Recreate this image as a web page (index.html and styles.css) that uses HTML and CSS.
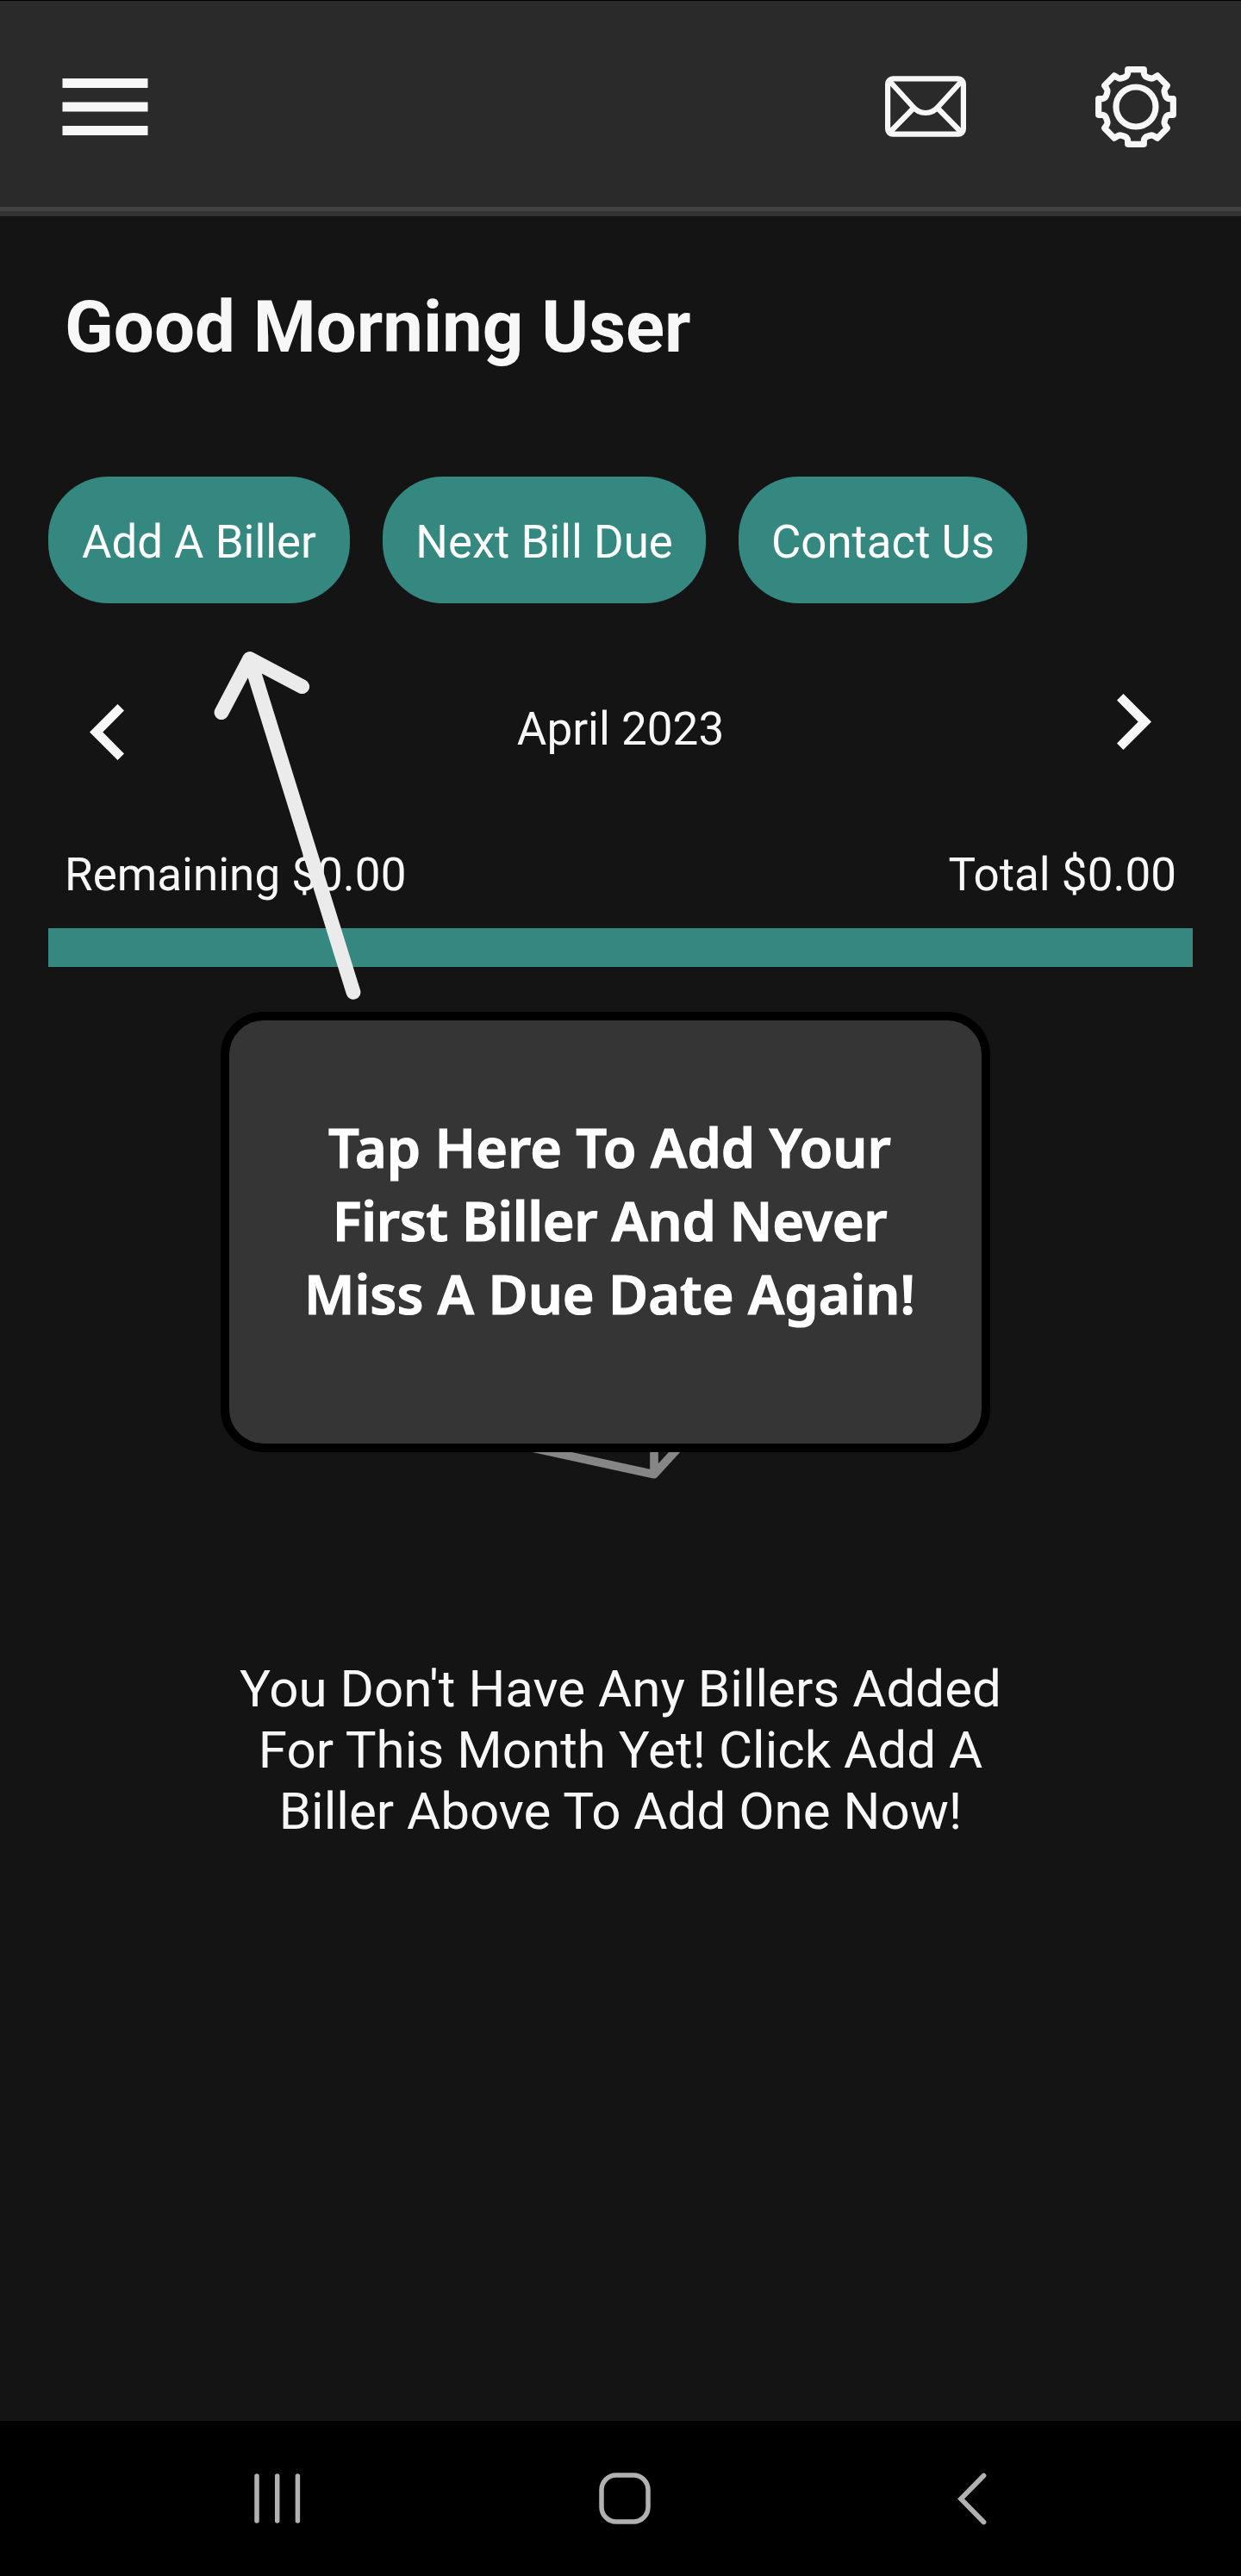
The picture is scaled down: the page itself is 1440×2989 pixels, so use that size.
FILE: index.html
```
<!DOCTYPE html>
<html lang="en">
<head>
<meta charset="utf-8">
<title>Bills</title>
<link rel="stylesheet" href="styles.css">
</head>
<body>
<div class="screen">
  <header class="topbar">
    <svg class="icon-menu" width="100" height="66" viewBox="0 0 100 66" fill="#f7f7f7">
      <rect x=".5" width="99" height="11"/><rect x=".5" y="27.5" width="99" height="11"/><rect x=".5" y="55" width="99" height="11"/>
    </svg>
    <div class="topbar-actions">
      <svg width="94" height="71" viewBox="0 0 94 71" fill="none" stroke="#f7f7f7" stroke-width="6.2">
        <rect x="3.1" y="3.4" width="87.8" height="64.3" rx="6"/>
        <path d="M6 7 32 35.500Q38 43 47 43Q56 43 62 35.500L88 7M6 65 33.500 37M88 65 60.500 37"/>
      </svg>
      <svg width="94" height="94" viewBox="-141 -141 282 282" fill="none" stroke="#f7f7f7" stroke-width="21.500" stroke-linejoin="round">
        <circle r="69"/>
        <path d="M-28-130H28V-117Q30-105 42-102L53-99Q58-98 64-102L75-109 109-74 102-64Q98-58 99-53L102-42Q105-30 117-28H130V28H117Q105 30 102 42L99 53Q98 58 102 64L109 74 75 109 64 102Q58 98 53 99L42 102Q30 105 28 117V130H-28V117Q-30 105-42 102L-53 99Q-58 98-64 102L-75 109-109 74-102 64Q-98 58-99 53L-102 42Q-105 30-117 28H-130V-28H-117Q-105-30-102-42L-99-53Q-98-58-102-64L-109-74-75-109-64-102Q-58-98-53-99L-42-102Q-30-105-28-117Z"/>
      </svg>
    </div>
  </header>

  <main class="content">
    <h1 class="greeting">Good Morning User</h1>
    <div class="actions">
      <button class="pill pill-add">Add A Biller</button>
      <button class="pill pill-next">Next Bill Due</button>
      <button class="pill pill-contact">Contact Us</button>
    </div>
    <div class="month">
      <svg class="prev" width="40" height="65" viewBox="0 0 40 65" fill="#f7f7f7"><path d="M0 32.500 32.500 0 40 7.500 15.300 32.500 40 57.500 32.500 65Z"/></svg>
      <span>April 2023</span>
      <svg class="next" width="40" height="65" viewBox="0 0 40 65" fill="#f7f7f7"><path d="M40 32.500 7.500 0 0 7.500 24.700 32.500 0 57.500 7.500 65Z"/></svg>
    </div>
    <div class="totals"><span>Remaining $0.00</span><span>Total $0.00</span></div>
    <div class="progress"></div>

    <section class="empty">
      <svg class="plane" width="320" height="320" viewBox="0 0 320 320" fill="none" stroke="#868686" stroke-width="9.700" stroke-linejoin="round"><path d="M6 153.700 199 195.700 314 70ZM199 195.700V110"/></svg>
      <p class="empty-text">You Don't Have Any Billers Added<br>For This Month Yet! Click Add A<br>Biller Above To Add One Now!</p>
    </section>
  </main>

  <nav class="navbar">
    <svg width="54" height="58" viewBox="0 0 54 58" stroke="#b1b1b1" stroke-width="5.500" stroke-linecap="round"><path d="M3 3V55M26.700 3V55M50.400 3V55"/></svg>
    <svg class="nav-home" width="60" height="60" viewBox="0 0 60 60" fill="none" stroke="#b1b1b1" stroke-width="5.500"><rect x="3" y="3" width="54" height="54" rx="17"/></svg>
    <svg width="34" height="61" viewBox="0 0 34 61" fill="none" stroke="#b1b1b1" stroke-width="5.800" stroke-linecap="round"><path d="M30.500 3.500 4 30.500 30.500 57.500"/></svg>
  </nav>

  <div class="coach">
    <p><span class="l1">Tap Here To Add Your</span><br><span class="l2">First Biller And Never</span><br><span class="l3">Miss A Due Date Again!</span></p>
  </div>
  <svg class="coach-arrow" width="180" height="420" viewBox="0 0 180 420" fill="none" stroke="#ebebeb" stroke-width="16.800" stroke-linecap="round" stroke-linejoin="round"><path d="M17 86.700 49.700 24.500 110.700 56.700M49.700 24.500 170 411.300"/></svg>
</div>
</body>
</html>
```
FILE: styles.css
```
* { box-sizing: border-box; }
body { margin: 0; background: #141414; }
svg { display: block; flex: none; }
.screen {
  position: relative;
  display: flex;
  flex-direction: column;
  width: 1440px;
  height: 2989px;
  overflow: hidden;
  background: #141414;
  color: #f7f7f7;
  font-family: Roboto, "Liberation Sans", sans-serif;
  font-size: 53px;
}
.topbar {
  display: flex;
  align-items: center;
  justify-content: space-between;
  height: 251px;
  padding: 5px 75px 10px 72px;
  border-top: 1px solid #000;
  background: linear-gradient(#2a2a2a 239px, #434343 239px, #434343 244px, #323232 244px);
}
.topbar-actions { display: flex; align-items: center; gap: 150px; }

.content { display: flex; flex-direction: column; flex: 1; padding: 0 56px; }
.greeting {
  margin: 80px 0 0 19px;
  font-size: 83.4px;
  font-weight: 700;
  line-height: 98px;
}
.actions { display: flex; margin-top: 124px; }
.pill {
  height: 147px;
  padding: 5px 0 0;
  border: 0;
  border-radius: 70px;
  background: #35887f;
  color: #fff;
  font: 52.8px/60px Roboto, "Liberation Sans", sans-serif;
  white-space: nowrap;
}
.pill-add { width: 350px; }
.pill-next { width: 375px; margin-left: 38px; }
.pill-contact { width: 335px; margin-left: 38px; }
.month {
  display: flex;
  align-items: center;
  justify-content: space-between;
  height: 90px;
  margin-top: 101px;
  padding: 0 48px;
}
.prev { margin-top: 7px; }
.next { margin-bottom: 17px; }
.totals {
  display: flex;
  justify-content: space-between;
  margin-top: 94px;
  padding: 0 19px;
  line-height: 60px;
}
.progress { height: 45px; margin-top: 32px; background: #35887f; }

.empty { display: flex; flex-direction: column; align-items: center; padding-top: 393px; }
.plane { margin-bottom: 89px; }
.empty-text {
  margin: 0;
  font-size: 60.1px;
  line-height: 71px;
  text-align: center;
}

.navbar {
  display: flex;
  align-items: center;
  justify-content: space-between;
  height: 180px;
  padding: 0 295px;
  background: #000;
}
.nav-home { margin-right: 11px; }

/* first-run hint shown over the page */
.coach {
  position: absolute;
  left: 256px;
  top: 1174px;
  width: 893px;
  height: 511px;
  padding-top: 104px;
  border: 10px solid #000;
  border-radius: 50px;
  background: #353535;
  color: #fff;
  font: 600 63px/85px "Noto Sans", "Open Sans", sans-serif;
  text-align: center;
  -webkit-text-stroke: 1.2px #fff;
}
.coach p { margin: 0 0 0 10px; }
.coach .l2 { letter-spacing: -.3px; }
.coach-arrow { position: absolute; left: 240px; top: 740px; }
```
